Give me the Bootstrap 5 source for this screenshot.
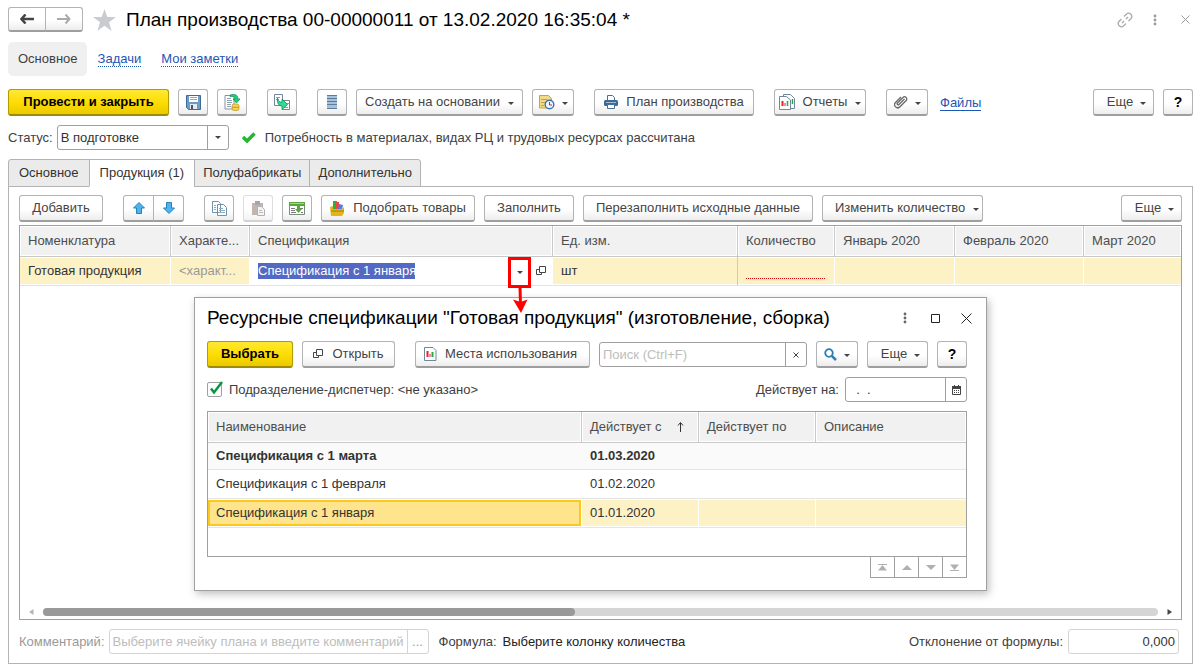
<!DOCTYPE html>
<html lang="ru">
<head>
<meta charset="utf-8">
<meta name="viewport" content="width=device-width, initial-scale=1">
<title>План производства</title>
<link href="https://cdn.jsdelivr.net/npm/bootstrap@5.3.0/dist/css/bootstrap.min.css" rel="stylesheet">
<style>
body{font-family:"Liberation Sans",Arial,sans-serif;font-size:13px;line-height:16px;color:#404040;background:#fff}
.app-page{padding:7px 10px 5px 8px}
.app-title{font-size:19px;line-height:24px;color:#000;margin:0}
.btn{--bs-btn-font-size:13px;--bs-btn-line-height:16px;--bs-btn-padding-x:12px;--bs-btn-padding-y:0;--bs-btn-color:#444;--bs-btn-border-color:#b3b3b3;--bs-btn-border-radius:3px;--bs-btn-disabled-border-color:#ccc;height:27px;display:inline-flex;align-items:center;justify-content:center;white-space:nowrap;background:linear-gradient(#fff 55%,#ededed);border-bottom:2px solid #9e9e9e;flex:none}
.btn-main{background:linear-gradient(#ffe833,#fddc00 55%,#eac900);border-color:#b39b00;border-bottom-color:#a08a00;color:#000;font-weight:bold;padding:0}
.btn-sq{width:30px;padding:0}
.btn-group .btn-sq{width:31px}
.btn-dd{width:42px;padding:0;gap:7px}
.btn-more{width:61px;padding:0 0 0 6px;gap:7px}
.btn-help{color:#000;font-weight:bold;font-size:14px}
.btn:disabled{border-bottom-color:#bbb}
.btn-hist{height:25px;width:38px;padding:0}
.caret-s{width:0;height:0;border:3px solid transparent;border-top-color:#444;border-bottom:0;flex:none}
.btn .caret-s{margin-top:2px}
.gap-9{gap:9px}
.ms-11{margin-left:11px}
.nav-row{margin-top:10px}
.nav-pill{background:#f0f0f0;border-radius:5px;padding:9px 9px 9px 10px;color:#404040;text-decoration:none}
.link-dot{color:#1b57b5;text-decoration:none;border-bottom:1px dotted #1b57b5;line-height:15px}
.link-dot+.link-dot{margin-left:20px}
.link-file{color:#1b57b5;text-decoration:none;border-bottom:1px solid #1b57b5;line-height:15px}
.plain{background:none;border:0;padding:0;color:inherit;display:inline-flex;align-items:center;justify-content:center}
.fld{display:flex;height:25px;border:1px solid #a0a0a0;border-radius:3px;background:#fff}
.fld input,.fld select{border:0;outline:0;background:none;appearance:none;flex:1 1 0;min-width:0;padding:0 3px;color:#333;font-size:13px;border-radius:0}
.fld input::placeholder{color:#bdbdbd;opacity:1}
.fld .plain{width:21px;border-left:1px solid #a0a0a0;color:#444}
.fld-pale,.fld-pale .plain{border-color:#d4d4d4}
.tabs-row{margin-bottom:-1px;position:relative;z-index:1}
.tab-i{height:28px;border:1px solid #b3b3b3;background:#ebebeb;padding:0 8px;color:#333;margin-right:-1px}
.tab-i:first-child{border-top-left-radius:3px;padding:0 10px}
.tab-i:last-child{border-top-right-radius:3px}
.tab-i.on{background:#fff;border-bottom-color:#fff;padding:0 10px}
.panel{border:1px solid #b3b3b3;padding:8px 10px 9px}
.grid-box{border:1px solid #a0a0a0;background:#fff}
.grid-t{table-layout:fixed;width:100%;border-collapse:separate;border-spacing:0}
.grid-t th{font-weight:normal;height:31px;padding:0 8px;background:#f1f1f1;border-right:1px solid #c9c9c9;border-bottom:1px solid #c9c9c9;box-shadow:inset 0 0 0 1px #fff;color:#4d4d4d;overflow:hidden;white-space:nowrap}
.grid-t td{height:29px;padding:0 8px;border-right:1px solid #fff;border-bottom:1px solid #e4e4e4;color:#333;overflow:hidden;white-space:nowrap}
.grid-t th:last-child,.grid-t td:last-child{border-right:0}
.grid-t .cur td{background:#fdf1c6;box-shadow:inset 0 1px #fff,inset 0 -1px #fff}
.grid-t .cur td.edit{background:#fff;position:relative;overflow:visible}
.edit input{display:block;width:157px;border:0;padding:0;height:16px;line-height:16px;background:#5369c3;color:#fff;outline:0}
.edit .drop{width:23px;height:31px;border:3px solid #f00;position:absolute;right:21px;top:0;z-index:3;background:#fff;display:flex;align-items:center;justify-content:center}
.edit .open{position:absolute;right:6px;top:9px}
.edit .pointer{position:absolute;right:24px;top:30px;z-index:5}
.need{border-bottom:1px dotted #d00;height:16px;margin-right:1px}
.grid-t .cur td.sel{background:#fde48d;box-shadow:inset 0 1px #fff,inset 0 -1px #fff;padding:0}
.sel div{border:2px solid #fac81e;height:26px;margin:1px 0;padding:3px 6px}
.dlg{position:absolute;left:174px;top:71px;width:793px;border:1px solid #a0a0a0;background:#fff;box-shadow:2px 3px 8px rgba(0,0,0,.25);padding:8px 19px 12px 12px;z-index:4}
.dlg .grid-box{margin-top:9px;padding-bottom:28px}
.dlg tr.soft td{background:#fafafa;font-weight:bold;border-right-color:#fafafa;height:27px}
.pager{gap:0;margin-top:-1px}
.pager button{width:25px;height:22px;border:1px solid #a0a0a0;margin-left:-1px;background:#fff;color:#b0b0b0}
.chk{appearance:none;width:15px;height:15px;border:1px solid #a0a0a0;border-radius:2px;margin:0;background:#fff}
.hbar{height:8px;background:#d5d5d5;border-radius:4px}
.hbar div{height:8px;background:#999;border-radius:4px}
svg{flex:none}
</style>
</head>
<body>
<svg width="0" height="0" class="position-absolute">
<defs>
<symbol id="i-open" viewBox="0 0 10 10"><path d="M3.500.5h6v6h-6zM3.500 3.500h-3v5h5v-2" fill="none" stroke="#444"/></symbol>
<symbol id="i-dots" viewBox="0 0 4 12"><g fill="currentColor"><circle cx="2" cy="2" r="1.400"/><circle cx="2" cy="6" r="1.400"/><circle cx="2" cy="10" r="1.400"/></g></symbol>
</defs>
</svg>
<main class="app-page d-flex flex-column min-vh-100">
  <header class="d-flex align-items-center">
    <div class="btn-group">
      <button class="btn btn-hist" aria-label="Назад"><svg width="14" height="10" viewBox="0 0 14 10"><path d="M5.500.5 1.500 5l4 4.500M2 5h12" fill="none" stroke="#444" stroke-width="2.500"/></svg></button>
      <button class="btn btn-hist" aria-label="Вперед"><svg width="14" height="10" viewBox="0 0 14 10"><path d="M8.500.5l4 4.500-4 4.500M12 5H0" fill="none" stroke="#aaa" stroke-width="2"/></svg></button>
    </div>
    <button class="plain" style="margin-left:10px" aria-label="Избранное"><svg width="23" height="22" viewBox="0 0 23 22"><path d="M11.500 0l2.800 8H23l-7 5.200L18.600 22l-7.100-5.200L4.400 22 7 13.200 0 8h8.700z" fill="#c9cccf"/></svg></button>
    <h1 class="app-title" style="margin-left:10px">План производства 00-00000011 от 13.02.2020 16:35:04 *</h1>
    <div class="ms-auto d-flex align-items-center" style="color:#999;margin-right:3px">
      <button class="plain" aria-label="Ссылка"><svg width="16" height="16" viewBox="0 0 16 16"><g fill="none" stroke="#aaa" stroke-width="1.300"><path d="M7 4.500 9.500 2a3.200 3.200 0 0 1 4.500 4.500L11.500 9M9 11.500 6.500 14A3.200 3.200 0 0 1 2 9.500L4.500 7M5 11l2-2M9 7l2-2"/></g></svg></button>
      <button class="plain ms-3 ps-1" aria-label="Меню"><svg width="4" height="12"><use href="#i-dots"/></svg></button>
      <button class="plain ms-4" aria-label="Закрыть"><svg width="9" height="9" viewBox="0 0 9 9"><path d="M.5.5l8 8M8.500.5l-8 8" stroke="#999" fill="none"/></svg></button>
    </div>
  </header>

  <nav class="nav-row d-flex align-items-center">
    <a class="nav-pill" href="#">Основное</a>
    <a class="link-dot ms-11" href="#">Задачи</a>
    <a class="link-dot" href="#">Мои заметки</a>
  </nav>

  <div class="d-flex align-items-center gap-9" style="margin-top:13px">
    <button class="btn btn-main" style="width:161px">Провести и закрыть</button>
    <button class="btn btn-sq" aria-label="Записать"><svg width="15" height="15" viewBox="0 0 15 15"><path d="M.5.5h14v14h-12l-2-2z" fill="#6f9cc6" stroke="#3f6a93"/><path d="M3 1h9v6H3z" fill="#fff"/><path d="M4 2.500h7M4 4.500h7" stroke="#9ab"/><path d="M4 9h7v5H4z" fill="#e3e9ee"/><path d="M5 10h2v4H5z" fill="#456"/></svg></button>
    <button class="btn btn-sq" aria-label="Провести"><svg width="17" height="17" viewBox="0 0 17 17"><path d="M1 1.500h9V15H1z" fill="#fff" stroke="#8494a3"/><path d="M3 4.500h4M3 6.500h5M3 8.500h5M3 10.500h4M3 12.500h4" stroke="#8fa0b0"/><path d="M6 1c5-1.500 8 0 8 4h2l-3.500 4L9 5h2c0-2-2-3-5-2.500z" fill="#18d07a" stroke="#0a8a4a" stroke-width=".7"/><rect x="8" y="10" width="7" height="6.500" rx="2" fill="#f5d35a" stroke="#c79a20" stroke-width=".8"/><path d="M8 13.300h7" stroke="#c79a20"/></svg></button>
    <button class="btn btn-sq ms-11" aria-label="Ввести на основании"><svg width="17" height="17" viewBox="0 0 17 17"><path d="M.5.5h8v11h-8zM8.500 6.500h7v9h-7z" fill="#fff" stroke="#71879b"/><path d="M2 3.500h4M2 5.500h3M10 13.500h4M12 9.500h3" stroke="#8fa0b0"/><path d="M3.500 4c0 3 2 4.500 4.500 4V5l5.500 5.500L8 15.500V12C5 12 2.500 9 3.500 4z" fill="#2fdc93" stroke="#0a9452" stroke-width=".8"/></svg></button>
    <button class="btn btn-sq ms-11" aria-label="Структура"><svg width="10" height="14" viewBox="0 0 10 14"><path d="M0 0h10v14H0z" fill="#a3c1da"/><path d="M0 .5h10M0 3.500h10M0 6.500h10M0 9.500h10M0 13.500h10" stroke="#5b7d9b"/></svg></button>
    <button class="btn" style="width:167px">Создать на основании<span class="caret-s ms-2"></span></button>
    <button class="btn btn-dd" aria-label="Отложенные действия"><svg width="16" height="16" viewBox="0 0 16 16"><path d="M.5 1.500h9l3 3V14H.5z" fill="#f0d987" stroke="#c5a446"/><path d="M2 5.500h6M2 8.500h4M2 11.500h3" stroke="#c5a446"/><circle cx="10.500" cy="10.500" r="4.300" fill="#eaf5ff" stroke="#3c73ae" stroke-width="1.400"/><path d="M10.500 8v3H13" stroke="#d23" fill="none"/></svg><span class="caret-s"></span></button>
    <button class="btn ms-11" style="width:160px"><svg class="me-2" width="14" height="14" viewBox="0 0 14 14"><path d="M3.500 5V.5h5l2 2V5" fill="#fff" stroke="#4a6f92"/><rect y="5" width="14" height="6" rx="1.500" fill="#3c6a94"/><path d="M2 7.500h10" stroke="#9fc0dc"/><path d="M3.500 9.500h7v4h-7z" fill="#fff" stroke="#4a6f92"/></svg>План производства</button>
    <button class="btn ms-11" style="width:92px;padding:0"><svg class="me-2" width="16" height="16" viewBox="0 0 16 16"><path d="M4.500 2V.5h7l4 4v10H12" fill="#fff" stroke="#71879b"/><path d="M.5 2.500h7l4 3.500v9.500H.5z" fill="#fff" stroke="#71879b"/><path d="M3.500 7v5" stroke="#e22" stroke-width="2"/><path d="M6 9v3" stroke="#e22"/><path d="M8.500 7v5M13.500 5v5" stroke="#2a4" stroke-width="1.500"/></svg>Отчеты<span class="caret-s ms-2"></span></button>
    <button class="btn btn-dd ms-11" aria-label="Присоединенные файлы"><svg width="14" height="14" viewBox="0 0 14 14"><path d="M10.500 4 5 9.500a1 1 0 0 1-1.500-1.500L9 2.500a2.100 2.100 0 0 1 3.200 3L6 11.800a3 3 0 0 1-4.500-4.300L7 2" fill="none" stroke="#666" stroke-width="1.300"/></svg><span class="caret-s"></span></button>
    <a class="link-file" style="margin-left:3px" href="#">Файлы</a>
    <button class="btn btn-more ms-auto">Еще<span class="caret-s"></span></button>
    <button class="btn btn-sq btn-help">?</button>
  </div>

  <div class="d-flex align-items-center gap-9" style="margin-top:9px">
    <label for="st" style="margin-right:-5px">Статус:</label>
    <div class="fld" style="width:172px"><select id="st"><option>В подготовке</option></select><button class="plain" aria-label="Выбрать статус"><span class="caret-s"></span></button></div>
    <svg class="ms-1" width="14" height="11" viewBox="0 0 14 11"><path d="M1 5l4 4L12.500 1.500" fill="none" stroke="#21b930" stroke-width="3.500"/></svg>
    <span>Потребность в материалах, видах РЦ и трудовых ресурсах рассчитана</span>
  </div>

  <div class="tabs-row d-flex" style="margin-top:9px">
    <button class="tab-i">Основное</button>
    <button class="tab-i on">Продукция (1)</button>
    <button class="tab-i">Полуфабрикаты</button>
    <button class="tab-i">Дополнительно</button>
  </div>

  <section class="panel flex-grow-1 d-flex flex-column">
    <div class="d-flex align-items-center gap-9">
      <button class="btn" style="width:84px">Добавить</button>
      <div class="btn-group ms-11">
        <button class="btn btn-sq" aria-label="Вверх"><svg width="12" height="12" viewBox="0 0 12 12"><path d="M6 .5l5.500 5.500H8.500v5.500h-5V6H.5z" fill="#4db4f0" stroke="#2880b9"/></svg></button>
        <button class="btn btn-sq" aria-label="Вниз"><svg width="12" height="12" viewBox="0 0 12 12"><path d="M6 11.500.5 6h3V.5h5V6h3z" fill="#4db4f0" stroke="#2880b9"/></svg></button>
      </div>
      <button class="btn btn-sq ms-11" aria-label="Скопировать"><svg width="15" height="15" viewBox="0 0 15 15"><path d="M.5.5h6l2 2v9h-8zM5.500 3.500h6l3 3v8h-9z" fill="#fff" stroke="#6e94ad"/><path d="M2 4.500h2M2 6.500h2M2 8.500h2M7 7.500h4M7 9.500h6M7 11.500h6" stroke="#8fadc0"/></svg></button>
      <button class="btn btn-sq" disabled aria-label="Вставить"><svg width="15" height="15" viewBox="0 0 15 15"><path d="M1 2h11v12H1z" fill="#a08f86"/><path d="M4 0h5v4H4z" fill="#777"/><path d="M6.500 5.500h4l3 3v6h-7z" fill="#eee" stroke="#888"/><path d="M8 9.500h3M8 11.500h4" stroke="#999"/></svg></button>
      <button class="btn btn-sq" aria-label="Заполнить строки"><svg width="16" height="13" viewBox="0 0 16 13"><path d="M.5.5h15v12H.5z" fill="#fff" stroke="#7b8b7b"/><path d="M0 0h16v4H0z" fill="#5aa73c"/><path d="M1 1.500h14" stroke="#9bdc7c"/><path d="M2 6.500h4M2 8.500h4M2 10.500h5M11 6.500h3M12 10.500h2" stroke="#777"/><path d="M8 4h3v3h2l-3.500 4L6 7h2z" fill="#4fae35"/></svg></button>
      <button class="btn" style="width:154px;padding:0"><svg class="me-2" width="15" height="16" viewBox="0 0 15 16"><path d="M3 1h4v8H3z" fill="#22b53b"/><path d="M6 2h3v7H6z" fill="#e44"/><path d="M9 4l4 1-1 5H8z" fill="#4b80e8"/><path d="M0 7l3-1v3h9l2-2v6l-2 3H1z" fill="#e2b520"/><path d="M1 11h13" stroke="#a67d00"/></svg>Подобрать товары</button>
      <button class="btn" style="width:90px">Заполнить</button>
      <button class="btn">Перезаполнить исходные данные</button>
      <button class="btn" style="width:161px;padding:0 3px 0 12px">Изменить количество<span class="caret-s ms-2"></span></button>
      <button class="btn btn-more ms-auto">Еще<span class="caret-s"></span></button>
    </div>

    <div class="grid-box position-relative flex-grow-1 d-flex flex-column" style="margin-top:3px">
      <table class="grid-t">
        <colgroup><col style="width:151px"><col style="width:79px"><col style="width:303px"><col style="width:185px"><col style="width:97px"><col style="width:120px"><col style="width:129px"><col></colgroup>
        <thead><tr><th>Номенклатура</th><th>Характе...</th><th>Спецификация</th><th>Ед. изм.</th><th>Количество</th><th>Январь 2020</th><th>Февраль 2020</th><th>Март 2020</th></tr></thead>
        <tbody><tr class="cur"><td>Готовая продукция</td><td style="color:#999">&lt;характ...</td>
          <td class="edit"><input value="Спецификация с 1 января" aria-label="Спецификация"><button class="drop p-0" aria-label="Выбрать"><span class="caret-s"></span></button><button class="plain open" aria-label="Открыть"><svg width="10" height="10"><use href="#i-open"/></svg></button>
          <svg class="pointer" width="15" height="26" viewBox="0 0 15 26"><path d="M7 0l.5 18" stroke="#f00" stroke-width="3"/><path d="M0 12.500 7.500 15l7-2.500L8 26z" fill="#f00"/></svg></td>
          <td style="border-right-color:#c9c9c9">шт</td><td><div class="need"></div></td><td></td><td></td><td></td></tr></tbody>
      </table>

      <div class="mt-auto d-flex align-items-center" style="padding:0 9px 3px">
        <button class="plain" aria-label="Прокрутить влево"><svg width="5" height="6" viewBox="0 0 5 6"><path d="M4.500 0v6L0 3z" fill="#b5b5b5"/></svg></button>
        <div class="hbar flex-grow-1" style="margin:0 9px"><div style="width:47.700%"></div></div>
        <button class="plain" aria-label="Прокрутить вправо"><svg width="5" height="6" viewBox="0 0 5 6"><path d="M.5 0v6L5 3z" fill="#444"/></svg></button>
      </div>

      <div class="dlg" role="dialog" aria-labelledby="dt">
        <div class="d-flex align-items-center">
          <h2 class="app-title" id="dt">Ресурсные спецификации "Готовая продукция" (изготовление, сборка)</h2>
          <button class="plain ms-auto" style="color:#666" aria-label="Меню"><svg width="4" height="12"><use href="#i-dots"/></svg></button>
          <button class="plain ms-4" aria-label="Развернуть"><svg width="9" height="9" viewBox="0 0 9 9"><path d="M.5.5h8v8h-8z" fill="none" stroke="#222"/></svg></button>
          <button class="plain" style="margin:0 -5px 0 21px" aria-label="Закрыть"><svg width="11" height="11" viewBox="0 0 11 11"><path d="M.5.5l10 10M10.500.5l-10 10" stroke="#222" fill="none"/></svg></button>
        </div>
        <div class="d-flex align-items-center gap-9" style="margin-top:11px">
          <button class="btn btn-main" style="width:86px">Выбрать</button>
          <button class="btn" style="width:93px;padding:0"><svg style="margin-right:9px" width="10" height="10"><use href="#i-open"/></svg>Открыть</button>
          <button class="btn ms-11" style="width:175px;padding:0 4px 0 0"><svg class="me-2" width="13" height="14" viewBox="0 0 13 14"><path d="M.5.5h8.500l3 3v10H.5z" fill="#fff" stroke="#71879b"/><path d="M3.500 4v6" stroke="#e22" stroke-width="2"/><path d="M6 7v3" stroke="#e22"/><path d="M8.500 5v5" stroke="#2a4" stroke-width="2"/></svg>Места использования</button>
          <div class="fld flex-grow-1"><input placeholder="Поиск (Ctrl+F)" aria-label="Поиск"><button class="plain" aria-label="Очистить"><svg width="6" height="6" viewBox="0 0 6 6"><path d="M.5.5l5 5M5.500.5l-5 5" stroke="#444"/></svg></button></div>
          <button class="btn btn-dd" aria-label="Найти"><svg width="13" height="13" viewBox="0 0 13 13"><circle cx="5" cy="5" r="3.800" fill="none" stroke="#2f7fb5" stroke-width="1.800"/><path d="M7.800 7.800l4.200 4.200" stroke="#2f7fb5" stroke-width="2.500"/></svg><span class="caret-s"></span></button>
          <button class="btn btn-more">Еще<span class="caret-s"></span></button>
          <button class="btn btn-sq btn-help">?</button>
        </div>
        <div class="d-flex align-items-center" style="margin-top:9px">
          <span class="position-relative d-inline-flex"><input class="chk" type="checkbox" id="dep" checked><svg class="position-absolute start-0 bottom-0 pe-none" width="17" height="16" viewBox="0 0 17 16"><path d="M4 7.500l3 4L15 1" fill="none" stroke="#0b9444" stroke-width="2.500"/></svg></span>
          <label for="dep" style="margin-left:7px">Подразделение-диспетчер: &lt;не указано&gt;</label>
          <label for="on" class="ms-auto" style="margin-right:6px">Действует на:</label>
          <div class="fld" style="width:122px"><input id="on" value="  .  ." style="white-space:pre"><button class="plain" aria-label="Календарь"><svg width="9" height="10" viewBox="0 0 9 10"><path d="M.5 1.500h8v8h-8z" fill="#fff" stroke="#444"/><path d="M0 1h9v3H0zM2 0h1v2H2zM6 0h1v2H6z" fill="#444"/><path d="M2 5.500h5M2 7.500h5" stroke="#444" stroke-dasharray="1 1"/></svg></button></div>
        </div>
        <div class="grid-box">
          <table class="grid-t">
            <colgroup><col style="width:374px"><col style="width:117px"><col style="width:117px"><col></colgroup>
            <thead><tr><th>Наименование</th><th>Действует с <svg width="7" height="10" viewBox="0 0 7 10" style="margin-left:12px;vertical-align:-1px"><path d="M3.500 10V1M1 3.500l2.500-3L6 3.500" fill="none" stroke="#333"/></svg></th><th>Действует по</th><th>Описание</th></tr></thead>
            <tbody>
              <tr class="soft"><td>Спецификация с 1 марта</td><td>01.03.2020</td><td></td><td></td></tr>
              <tr><td>Спецификация с 1 февраля</td><td>01.02.2020</td><td></td><td></td></tr>
              <tr class="cur"><td class="sel"><div>Спецификация с 1 января</div></td><td>01.01.2020</td><td></td><td></td></tr>
            </tbody>
          </table>
        </div>
        <div class="pager d-flex justify-content-end">
          <button class="plain" aria-label="В начало"><svg width="11" height="7" viewBox="0 0 11 7"><path d="M1 .5h9" stroke="#b0b0b0"/><path d="M5.500 1l4.500 5.500H1z" fill="#b0b0b0"/></svg></button>
          <button class="plain" aria-label="Предыдущая"><svg width="10" height="5"><path d="M5 0l5 5H0z" fill="#b0b0b0"/></svg></button>
          <button class="plain" aria-label="Следующая"><svg width="10" height="5"><path d="M0 0h10L5 5z" fill="#b0b0b0"/></svg></button>
          <button class="plain" aria-label="В конец"><svg width="11" height="7" viewBox="0 0 11 7"><path d="M1 6.500h9" stroke="#b0b0b0"/><path d="M5.500 6 1 .5h9z" fill="#b0b0b0"/></svg></button>
        </div>
      </div>
    </div>

    <div class="d-flex align-items-center" style="margin-top:9px">
      <label for="cm" style="color:#999;margin-right:4px">Комментарий:</label>
      <div class="fld fld-pale" style="width:320px"><input id="cm" placeholder="Выберите ячейку плана и введите комментарий"><button class="plain" style="color:#999" aria-label="Открыть комментарий">...</button></div>
      <span style="margin-left:10px">Формула:</span><span style="margin-left:6px;color:#222">Выберите колонку количества</span>
      <label for="dv" class="ms-auto" style="margin-right:5px">Отклонение от формулы:</label>
      <div class="fld fld-pale" style="width:111px;margin-right:3px"><input id="dv" class="text-end" value="0,000"></div>
    </div>
  </section>
</main>
<script src="https://cdn.jsdelivr.net/npm/bootstrap@5.3.0/dist/js/bootstrap.bundle.min.js"></script>
</body>
</html>
